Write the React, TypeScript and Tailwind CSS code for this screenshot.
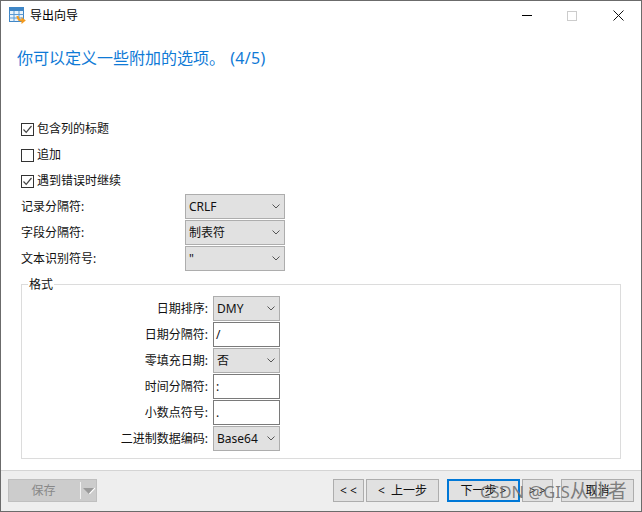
import React from "react";

const font = "font-['Noto_Sans','Noto_Sans_CJK_SC',sans-serif]";

function Chevron() {
  return (
    <svg width="8" height="5" viewBox="0 0 8 5" className="shrink-0 mr-[1px]">
      <path d="M0.5 0.5 L4 4 L7.5 0.5" fill="none" stroke="#555" strokeWidth="1" />
    </svg>
  );
}

function Combo({ value, w }: { value: string; w: string }) {
  return (
    <div className={`${w} h-[25px] flex items-center justify-between border border-[#adadad] bg-[#e1e1e1] pl-[3px] pr-[3px] text-[12px] text-[#111]`}>
      <span className="whitespace-nowrap">{value}</span>
      <Chevron />
    </div>
  );
}

function TextBox({ value }: { value: string }) {
  return (
    <div className="w-[67px] h-[25px] flex items-center border border-[#7a7a7a] bg-white pl-[2px] text-[12px] text-[#111]">
      {value}
    </div>
  );
}

function Check({ checked, label }: { checked?: boolean; label: string }) {
  return (
    <div className="h-[26px] flex items-center gap-[3px] text-[12px] text-[#111]">
      <div className="w-[13px] h-[13px] border border-[#333] bg-white flex items-center justify-center">
        {checked && (
          <svg width="11" height="11" viewBox="0 0 11 11">
            <path d="M1.5 5.5 L4.2 8.4 L9.5 2" fill="none" stroke="#444" strokeWidth="1.2" />
          </svg>
        )}
      </div>
      <span>{label}</span>
    </div>
  );
}

function Row({ label, value }: { label: string; value: string }) {
  return (
    <div className="flex items-center h-[25px]">
      <div className="w-[164px] text-[12px] text-[#111]">{label}</div>
      <Combo value={value} w="w-[100px]" />
    </div>
  );
}

function FRow({ label, children }: { label: string; children: React.ReactNode }) {
  return (
    <div className="flex items-center h-[25px]">
      <div className="w-[186px] text-right text-[12px] text-[#111] whitespace-nowrap">{label}</div>
      <div className="ml-[5px]">{children}</div>
    </div>
  );
}

function Btn({ w, label, primary }: { w: string; label: string; primary?: boolean }) {
  return (
    <div
      className={`${w} h-[23px] flex items-center justify-center bg-[#e1e1e1] text-[12px] text-[#111] whitespace-pre ${
        primary ? "border-2 border-[#0078d7]" : "border border-[#adadad]"
      }`}
    >
      {label}
    </div>
  );
}

export default function App() {
  return (
    <div className={`${font} w-[642px] h-[512px] flex flex-col bg-white border border-[#6b6b6b] overflow-hidden relative`}>
      <div className="h-[29px] shrink-0 flex items-center pl-[8px]">
        <svg width="17" height="17" viewBox="0 0 17 17" className="shrink-0">
          <rect x="0.5" y="0.5" width="14" height="14" fill="#eaf3fb" stroke="#3f86c6" />
          <rect x="0.5" y="0.5" width="14" height="3.5" fill="#3f86c6" />
          <path d="M5 4 V14.5 M10 4 V14.5 M0.5 7.5 H14.5 M0.5 11 H14.5" stroke="#5b9bd5" strokeWidth="1" />
          <path d="M8.5 9 Q9 13.8 13.5 13.5" fill="none" stroke="#f39a1e" strokeWidth="2.2" />
          <path d="M12.5 10 L16.8 13.5 L12.5 16.9 Z" fill="#f39a1e" />
        </svg>
        <span className="ml-[4px] text-[12px] text-black">导出向导</span>
        <div className="ml-auto flex items-center h-full">
          <div className="w-[46px] flex justify-center pl-[1px]"><div className="w-[10px] h-[1px] bg-black" /></div>
          <div className="w-[46px] flex justify-center"><div className="w-[10px] h-[10px] border border-[#ccc]" /></div>
          <div className="w-[46px] flex justify-center">
            <svg width="11" height="11" viewBox="0 0 11 11"><path d="M0.5 0.5 L10.5 10.5 M10.5 0.5 L0.5 10.5" stroke="#111" strokeWidth="1" /></svg>
          </div>
        </div>
      </div>

      <div className="h-[86px] shrink-0 pl-[16px] pt-[16px] text-[16px] leading-[24px] text-[#0f7ad6] whitespace-nowrap">
        你可以定义一些附加的选项。 <span className="ml-[1px] tracking-[0.3px]">(4/5)</span>
      </div>

      <div className="pl-[20px] flex flex-col">
        <Check checked label="包含列的标题" />
        <Check label="追加" />
        <Check checked label="遇到错误时继续" />
      </div>

      <div className="pl-[20px] flex flex-col gap-[1px]">
        <Row label="记录分隔符:" value="CRLF" />
        <Row label="字段分隔符:" value="制表符" />
        <Row label="文本识别符号:" value={'"'} />
      </div>

      <div className="relative ml-[20px] mt-[13px] w-[600px] h-[175px] border border-[#dcdcdc] pt-[11px] flex flex-col gap-[1px]">
        <div className="absolute left-[6px] top-[-8px] bg-white px-[1px] text-[12px] leading-[16px] text-[#111]">格式</div>
        <FRow label="日期排序:"><Combo value="DMY" w="w-[67px]" /></FRow>
        <FRow label="日期分隔符:"><TextBox value="/" /></FRow>
        <FRow label="零填充日期:"><Combo value="否" w="w-[67px]" /></FRow>
        <FRow label="时间分隔符:"><TextBox value=":" /></FRow>
        <FRow label="小数点符号:"><TextBox value="." /></FRow>
        <FRow label="二进制数据编码:"><Combo value="Base64" w="w-[67px]" /></FRow>
      </div>

      <div className="mt-auto h-[41px] shrink-0 bg-[#eeeeee] border-t border-[#d4d4d4] flex items-start pt-[8px] pl-[7px] pr-[7px]">
        <div className="w-[89px] h-[23px] flex items-center bg-[#cccccc] border border-[#bfbfbf] text-[12px] text-[#888]">
          <span className="w-[72px] pr-[2px] text-center">保存</span>
          <div className="w-[1px] h-[17px] bg-[#f2f2f2]" />
          <svg width="14" height="8" viewBox="0 0 14 8" className="ml-[1px]"><path d="M1 1 H13 L7 7 Z" fill="#9a9a9a" /><path d="M13 1 L7.5 7" stroke="#fff" strokeWidth="1.2" /></svg>
        </div>
        <div className="ml-auto flex">
          <Btn w="w-[31px]" label="< <" />
          <div className="ml-[2px]"><Btn w="w-[73px]" label="<  上一步" /></div>
          <div className="ml-[8px]"><Btn w="w-[73px]" label="下一步 >" primary /></div>
          <div className="ml-[2px]"><Btn w="w-[31px]" label="> >" /></div>
          <div className="ml-[8px]"><Btn w="w-[73px]" label="取消" /></div>
        </div>
      </div>

      <div className="absolute left-[479px] top-[478px] text-[16.5px] leading-[24px] text-[#707070]/90 whitespace-nowrap pointer-events-none">
        CSDN @GIS<span className="text-[19px]">从业者</span>
      </div>
    </div>
  );
}
